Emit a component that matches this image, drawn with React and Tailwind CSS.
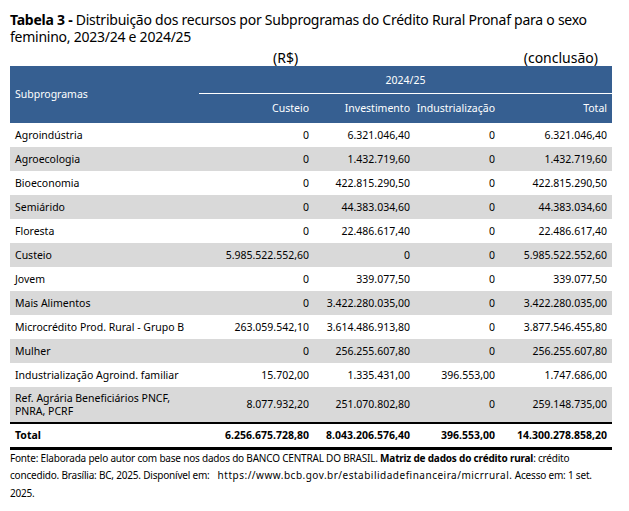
import React from "react";

const rows = [
  ["Agroindústria", "0", "6.321.046,40", "0", "6.321.046,40"],
  ["Agroecologia", "0", "1.432.719,60", "0", "1.432.719,60"],
  ["Bioeconomia", "0", "422.815.290,50", "0", "422.815.290,50"],
  ["Semiárido", "0", "44.383.034,60", "0", "44.383.034,60"],
  ["Floresta", "0", "22.486.617,40", "0", "22.486.617,40"],
  ["Custeio", "5.985.522.552,60", "0", "0", "5.985.522.552,60"],
  ["Jovem", "0", "339.077,50", "0", "339.077,50"],
  ["Mais Alimentos", "0", "3.422.280.035,00", "0", "3.422.280.035,00"],
  ["Microcrédito Prod. Rural - Grupo B", "263.059.542,10", "3.614.486.913,80", "0", "3.877.546.455,80"],
  ["Mulher", "0", "256.255.607,80", "0", "256.255.607,80"],
  ["Industrialização Agroind. familiar", "15.702,00", "1.335.431,00", "396.553,00", "1.747.686,00"],
];

const App = () => {
  return (
    <div className="w-[629px] h-[511px] bg-white text-black font-['Noto_Sans',sans-serif]">
      <div className="pl-[10px] pr-[17px] pt-[12px]">
        <p className="text-[14px] leading-[16.5px] tracking-[-0.25px]">
          <span className="font-bold">Tabela 3 - </span>
          Distribuição dos recursos por Subprogramas do Crédito Rural Pronaf para o sexo feminino, 2023/24 e 2024/25
        </p>

        <div className="flex h-[19px] items-end text-[14px] leading-[16px] mt-[2px]">
          <span className="ml-[263px]">(R$)</span>
          <span className="ml-auto mr-[14px]">(conclusão)</span>
        </div>

        <table className="w-[602px] table-fixed border-collapse text-[10.5px] leading-[13px]">
          <colgroup>
            <col className="w-[189px]" />
            <col className="w-[114px]" />
            <col className="w-[100px]" />
            <col className="w-[85px]" />
            <col className="w-[114px]" />
          </colgroup>
          <thead className="bg-[#365f91] text-white">
            <tr className="h-[27px]">
              <th rowSpan={2} className="text-left font-normal pl-[5px]">
                Subprogramas
              </th>
              <th colSpan={4} className="font-normal text-center border-b border-white pt-[2px]">
                2024/25
              </th>
            </tr>
            <tr className="h-[30px]">
              <th className="text-right font-normal pr-[4px]">Custeio</th>
              <th className="text-right font-normal pr-[3px]">Investimento</th>
              <th className="text-right font-normal pr-[3px]">Industrialização</th>
              <th className="text-right font-normal pr-[5px]">Total</th>
            </tr>
          </thead>
          <tbody>
            {rows.map((r, i) => (
              <tr
                key={r[0]}
                className={i % 2 === 1 ? "h-[24px] bg-[#d9d9d9]" : "h-[24px]"}
              >
                <td className="pl-[5px]">{r[0]}</td>
                <td className="text-right pr-[4px]">{r[1]}</td>
                <td className="text-right pr-[3px]">{r[2]}</td>
                <td className="text-right pr-[3px]">{r[3]}</td>
                <td className="text-right pr-[5px]">{r[4]}</td>
              </tr>
            ))}
            <tr className="h-[36px] bg-[#d9d9d9] border-b-2 border-black">
              <td className="pl-[5px]">
                Ref. Agrária Beneficiários PNCF,
                <br />
                PNRA, PCRF
              </td>
              <td className="text-right pr-[4px]">8.077.932,20</td>
              <td className="text-right pr-[3px]">251.070.802,80</td>
              <td className="text-right pr-[3px]">0</td>
              <td className="text-right pr-[5px]">259.148.735,00</td>
            </tr>
            <tr className="h-[25px] font-bold border-b-[3px] border-black">
              <td className="pl-[5px]">Total</td>
              <td className="text-right pr-[4px]">6.256.675.728,80</td>
              <td className="text-right pr-[3px]">8.043.206.576,40</td>
              <td className="text-right pr-[3px]">396.553,00</td>
              <td className="text-right pr-[5px]">14.300.278.858,20</td>
            </tr>
          </tbody>
        </table>

        <p className="mt-0 text-[10px] leading-[17.5px] tracking-[-0.2px] whitespace-nowrap">
          Fonte: Elaborada pelo autor com base nos dados do BANCO CENTRAL DO BRASIL.{" "}
          <span className="font-bold">Matriz de dados do crédito rural</span>: crédito
          <br />
          concedido. Brasília: BC, 2025. Disponível em:
          <span className="ml-[8px] tracking-[0.5px]">https://www.bcb.gov.br/estabilidadefinanceira/micrrural.</span>{" "}
          Acesso em: 1 set.
          <br />
          2025.
        </p>
      </div>
    </div>
  );
};

export default App;
